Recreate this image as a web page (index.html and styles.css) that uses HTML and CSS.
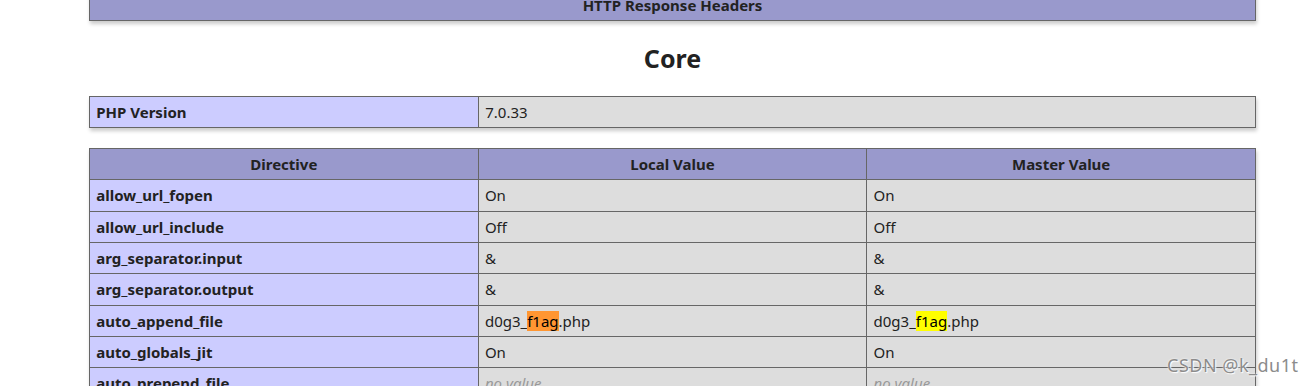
FILE: index.html
```
<!DOCTYPE html>
<html>
<head>
<meta charset="utf-8">
<link rel="stylesheet" href="styles.css">
</head>
<body>
<div class="center">
<table class="first">
<tr class="h"><th>HTTP Response Headers</th></tr>
</table>
<h2>Core</h2>
<table>
<tr><td class="e">PHP Version </td><td class="v">7.0.33 </td></tr>
</table>
<table>
<tr class="h"><th>Directive</th><th>Local Value</th><th>Master Value</th></tr>
<tr><td class="e">allow_url_fopen</td><td class="v">On</td><td class="v">On</td></tr>
<tr><td class="e">allow_url_include</td><td class="v">Off</td><td class="v">Off</td></tr>
<tr><td class="e">arg_separator.input</td><td class="v">&amp;</td><td class="v">&amp;</td></tr>
<tr><td class="e">arg_separator.output</td><td class="v">&amp;</td><td class="v">&amp;</td></tr>
<tr><td class="e">auto_append_file</td><td class="v">d0g3_<span class="hl-active">f1ag</span>.php</td><td class="v">d0g3_<span class="hl">f1ag</span>.php</td></tr>
<tr><td class="e">auto_globals_jit</td><td class="v">On</td><td class="v">On</td></tr>
<tr><td class="e">auto_prepend_file</td><td class="v"><i>no value</i></td><td class="v"><i>no value</i></td></tr>
<tr><td class="e">browscap</td><td class="v"><i>no value</i></td><td class="v"><i>no value</i></td></tr>
</table>
</div>
<div class="watermark">CSDN @k_du1t</div>
</body>
</html>
```
FILE: styles.css
```
html, body {
  margin: 0;
  padding: 0;
  overflow: hidden;
}
body {
  background-color: #fff;
  color: #222;
  font-family: "Noto Sans", "Liberation Sans", sans-serif;
  font-size: 20px;
  height: 386px;
  position: relative;
}
.center {
  width: 1167px;
  margin-left: 89px;
  margin-top: -11px;
  display: flow-root;
}
table {
  border-collapse: collapse;
  border: 0;
  width: 1167px;
  box-shadow: 1.25px 2.5px 3.75px #ccc;
  margin: 20px 0;
  text-align: left;
  table-layout: fixed;
}
table.first {
  margin-top: 0;
}
td, th {
  border: 1px solid #666;
  font-size: 15px;
  line-height: 20.33px;
  vertical-align: baseline;
  padding: 5px 6.25px;
}
h2 {
  font-size: 25px;
  font-weight: bold;
  text-align: center;
  margin: 20.75px 0;
  line-height: 33px;
}
.e {
  background-color: #ccf;
  font-weight: bold;
  width: 375.5px;
}
.h {
  background-color: #99c;
  font-weight: bold;
}
.h th {
  text-align: center;
}
.v {
  background-color: #ddd;
}
.v i {
  color: #999;
}
.hl-active {
  background-color: #ff9632;
  color: #000;
}
.hl {
  background-color: #ffff00;
  color: #000;
}
.watermark {
  position: absolute;
  left: 1167px;
  top: 353px;
  font-family: "Noto Sans", sans-serif;
  font-size: 18px;
  letter-spacing: 0.5px;
  color: #8c8c8c;
  text-shadow: 0 0 2px #fff, 1px 1px 1px #fff;
}
```
